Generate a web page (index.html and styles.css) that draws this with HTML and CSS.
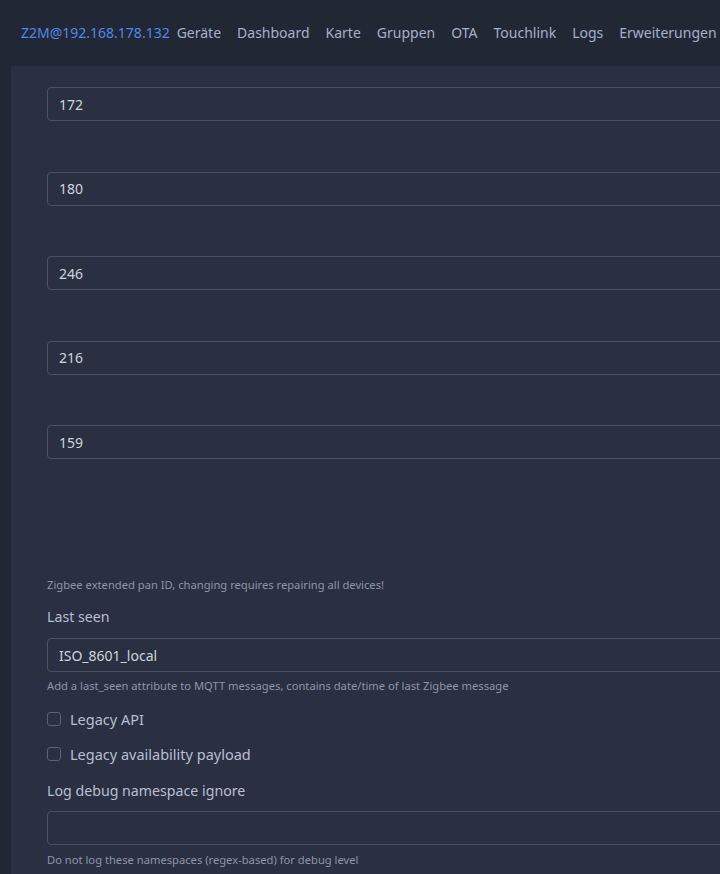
FILE: index.html
```html
<!DOCTYPE html>
<html lang="de">
<head>
<meta charset="utf-8">
<title>Z2M</title>
<link rel="stylesheet" href="styles.css">
</head>
<body>
<header class="topbar">
  <a class="brand">Z2M@192.168.178.132</a>
  <nav class="nav">
    <a>Geräte</a>
    <a>Dashboard</a>
    <a>Karte</a>
    <a>Gruppen</a>
    <a>OTA</a>
    <a>Touchlink</a>
    <a>Logs</a>
    <a>Erweiterungen</a>
  </nav>
</header>
<main class="content">
  <div class="array">
    <input class="field" value="172">
    <input class="field" value="180">
    <input class="field" value="246">
    <input class="field" value="216">
    <input class="field" value="159">
  </div>
  <div class="help help-pan">Zigbee extended pan ID, changing requires repairing all devices!</div>
  <label class="label">Last seen</label>
  <input class="field" value="ISO_8601_local">
  <div class="help">Add a last_seen attribute to MQTT messages, contains date/time of last Zigbee message</div>
  <label class="check"><span class="box"></span>Legacy API</label>
  <label class="check"><span class="box"></span>Legacy availability payload</label>
  <label class="label label-log">Log debug namespace ignore</label>
  <input class="field" value="">
  <div class="help help-last">Do not log these namespaces (regex-based) for debug level</div>
</main>
</body>
</html>
```
FILE: styles.css
```css
html, body {
  margin: 0;
  padding: 0;
  overflow: hidden;
  background: #222736;
  font-family: "Noto Sans", "Open Sans", sans-serif;
  color: #c3cbe4;
}
.topbar {
  height: 66px;
  display: flex;
  align-items: center;
  padding-left: 21px;
  white-space: nowrap;
  box-sizing: border-box;
  padding-bottom: 2px;
}
.brand {
  color: #4d8ae8;
  font-size: 14px;
  margin-right: -1px;
}
.nav {
  display: flex;
}
.nav a {
  color: #a6b0c8;
  font-size: 14px;
  padding: 0 8px;
}
.content {
  margin-left: 11px;
  background: #2a3042;
  min-height: 808px;
  padding: 21px 0 0 36px;
  width: 900px;
}
.array {
  display: flex;
  flex-direction: column;
  gap: 50.5px;
}
.field {
  display: block;
  width: 800px;
  height: 34px;
  box-sizing: border-box;
  background: #2a3042;
  border: 1px solid #4b5264;
  border-radius: 4px;
  color: #ced4da;
  font-family: inherit;
  font-size: 14px;
  padding: 0 11px;
  outline: none;
}
.help {
  font-size: 11.2px;
  color: #8e95a6;
  line-height: 16px;
  margin-top: 6px;
}
.help-pan {
  margin-top: 118px;
}
.help-last {
  margin-top: 7px;
}
.label {
  display: block;
  font-size: 14.2px;
  color: #b8bfd2;
  margin-top: 14px;
  margin-bottom: 11px;
  line-height: 20px;
}
.check {
  display: flex;
  align-items: center;
  gap: 9px;
  font-size: 14.5px;
  color: #b8bfd2;
  line-height: 20px;
  margin-top: 15px;
}
.box {
  width: 14px;
  height: 14px;
  border: 1px solid #5a6174;
  border-radius: 3px;
  box-sizing: border-box;
  display: inline-block;
}
.label-log {
  margin-top: 17px;
  margin-bottom: 10px;
}
```
